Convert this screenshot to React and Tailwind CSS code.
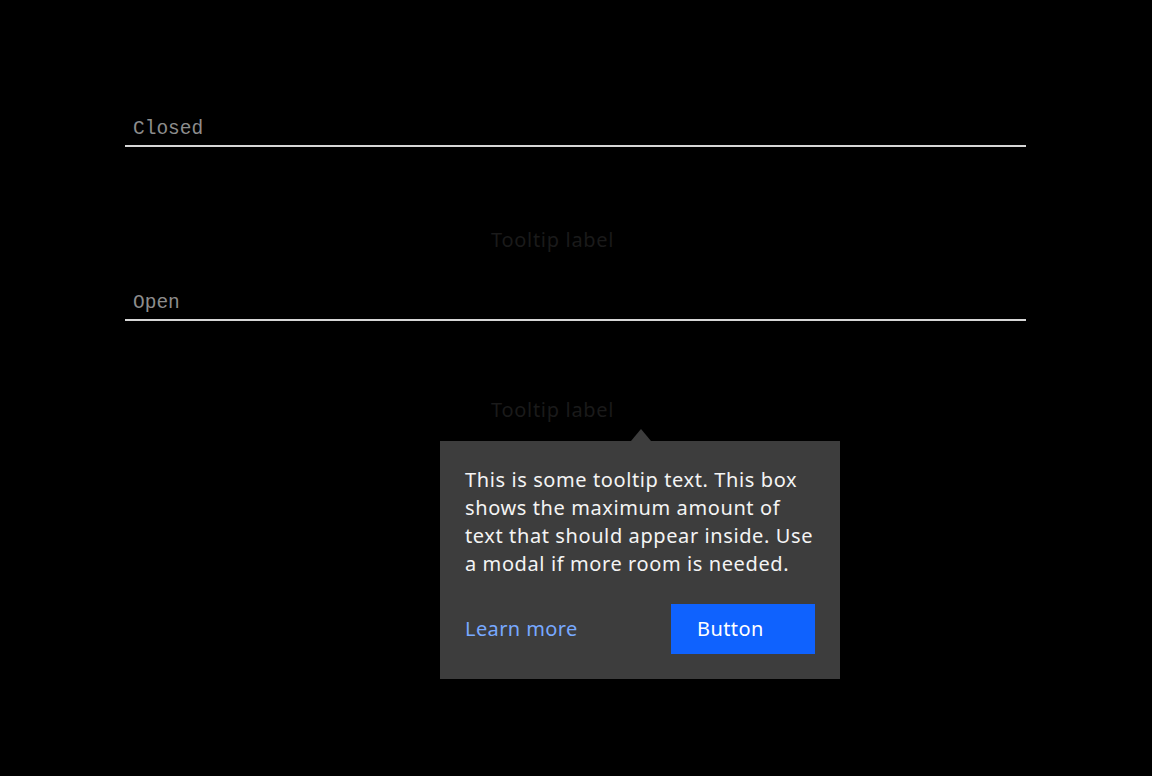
import React from 'react';

const sans = "font-['Noto_Sans',_'Open_Sans',_sans-serif]";
const mono = "font-['Liberation_Mono',_'DejaVu_Sans_Mono',_monospace]";

const FieldLabel = ({ children, className = '' }) => (
  <div className={`${className}`}>
    <p className={`pl-[8px] text-[19.5px] leading-[24px] text-[#8d8d8d] ${mono}`}>{children}</p>
    <div className="mt-[4px] h-[2px] w-full bg-[#d6d6d6]" />
  </div>
);

const TriggerLabel = ({ className = '', children }) => (
  <div className={`relative pl-[366px] ${className}`}>
    <span className={`text-[20px] leading-[28px] tracking-[0.7px] text-[#1a1a1a] ${sans}`}>Tooltip label</span>
    {children}
  </div>
);

const TooltipBox = () => (
  <div className="absolute left-[315px] top-[33px] w-[400px]">
    <svg width="20" height="12" viewBox="0 0 20 12" className="ml-[191px] block">
      <polygon points="10,0 20,12 0,12" fill="#3d3d3d" />
    </svg>
    <div className={`bg-[#3d3d3d] px-[25px] pb-[25px] pt-[25px] ${sans}`}>
      <p className="text-[20px] leading-[28px] tracking-[0.6px] text-[#f4f4f4]">
        This is some tooltip text. This box shows the maximum amount of text that should appear inside. Use a
        modal if more room is needed.
      </p>
      <div className="mt-[26px] flex items-center justify-between">
        <a href="#" className="text-[20px] tracking-[0.4px] text-[#78a9ff]">Learn more</a>
        <button type="button" className="h-[50px] w-[144px] bg-[#0f62fe] pl-[26px] text-left text-[20px] tracking-[0.4px] text-white">
          Button
        </button>
      </div>
    </div>
  </div>
);

export default function App() {
  return (
    <div className="h-[776px] w-full bg-black">
      <div className="ml-[125px] w-[901px] pt-[117px]">
        <FieldLabel>Closed</FieldLabel>
        <TriggerLabel className="mt-[79px]" />
        <FieldLabel className="mt-[37px]">Open</FieldLabel>
        <TriggerLabel className="mt-[75px]">
          <TooltipBox />
        </TriggerLabel>
      </div>
    </div>
  );
}
